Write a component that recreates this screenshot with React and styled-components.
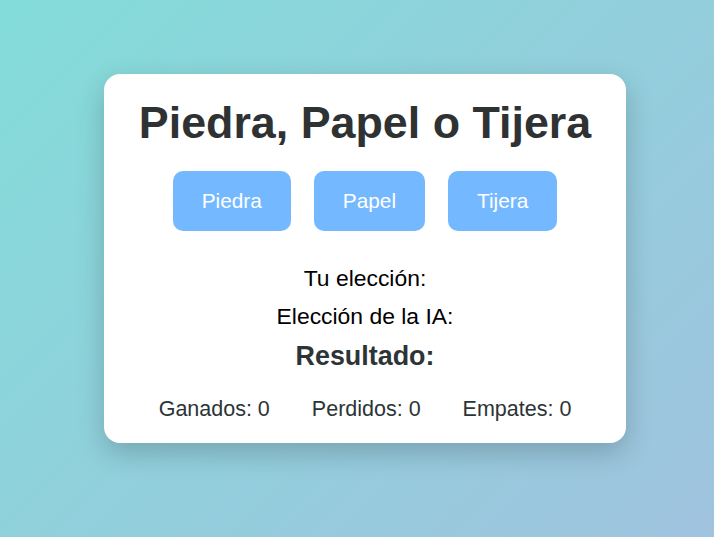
import React from "react";
import styled, { createGlobalStyle } from "styled-components";

const GlobalStyle = createGlobalStyle`
  html, body {
    margin: 0;
    padding: 0;
  }
  body {
    min-height: 100vh;
    background: linear-gradient(135deg, #83dcd9 0%, #a0c3df 100%);
    font-family: "Liberation Sans", Arial, sans-serif;
  }
`;

const Page = styled.div`
  min-height: 100vh;
  box-sizing: border-box;
  display: flex;
  justify-content: center;
  align-items: flex-start;
  padding: 74px 0 0 16px;
`;

const Card = styled.div`
  width: 522px;
  box-sizing: border-box;
  background: #ffffff;
  border-radius: 16px;
  box-shadow: 0 10px 28px rgba(0, 0, 0, 0.2);
  padding: 22px 20px 22px;
  display: flex;
  flex-direction: column;
  align-items: center;
  text-align: center;
`;

const Title = styled.h1`
  margin: 0;
  font-size: 44.8px;
  line-height: 52px;
  font-weight: 700;
  color: #2f3233;
`;

const Choices = styled.div`
  display: flex;
  gap: 23px;
  margin-top: 23px;
`;

const ChoiceButton = styled.button`
  border: none;
  background: #74b9ff;
  color: #ffffff;
  font-family: "Liberation Sans", Arial, sans-serif;
  font-size: 20.8px;
  line-height: 24px;
  padding: 18px 29px;
  border-radius: 10px;
  cursor: pointer;
`;

const Info = styled.p`
  margin: ${(p) => p.$top}px 0 0;
  font-size: 22.9px;
  line-height: 26px;
  color: #000;
`;

const Result = styled.p`
  margin: 11.5px 0 0;
  font-size: 26.88px;
  line-height: 30px;
  font-weight: 700;
  color: #2d3436;
`;

const Stats = styled.div`
  display: flex;
  gap: 42px;
  margin-top: 26.5px;
  font-size: 21.5px;
  line-height: 24px;
  color: #2d3436;
`;

const Stat = styled.span``;

export default function App() {
  return (
    <>
      <GlobalStyle />
      <Page>
        <Card>
          <Title>Piedra, Papel o Tijera</Title>
          <Choices>
            <ChoiceButton>Piedra</ChoiceButton>
            <ChoiceButton>Papel</ChoiceButton>
            <ChoiceButton>Tijera</ChoiceButton>
          </Choices>
          <Info $top={34}>Tu elección:</Info>
          <Info $top={12}>Elección de la IA:</Info>
          <Result>Resultado:</Result>
          <Stats>
            <Stat>Ganados: 0</Stat>
            <Stat>Perdidos: 0</Stat>
            <Stat>Empates: 0</Stat>
          </Stats>
        </Card>
      </Page>
    </>
  );
}
